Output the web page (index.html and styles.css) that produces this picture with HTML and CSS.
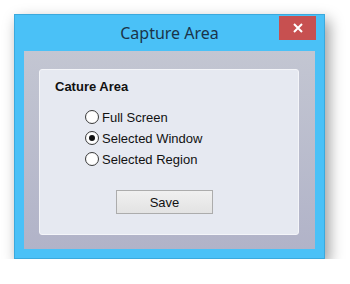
FILE: index.html
```html
<!DOCTYPE html>
<html lang="en">
<head>
    <meta charset="UTF-8">
    <title>Capture Area</title>
    <link rel="stylesheet" href="styles.css">
</head>
<body>
    <div class="window">
        <div class="titlebar">
            <span class="title">Capture Area</span>
            <div class="close-btn">
                <svg width="10" height="10" viewBox="0 0 10 10">
                    <path d="M1 1 L9 9 M9 1 L1 9" stroke="#fff" stroke-width="2"/>
                </svg>
            </div>
        </div>
        <div class="client">
            <div class="panel">
                <h3>Cature Area</h3>
                <div class="options">
                    <div class="option"><span class="radio"></span>Full Screen</div>
                    <div class="option"><span class="radio checked"></span>Selected Window</div>
                    <div class="option"><span class="radio"></span>Selected Region</div>
                </div>
                <button class="save-btn">Save</button>
            </div>
        </div>
    </div>
</body>
</html>
```

FILE: styles.css
```css
* {
    margin: 0;
    padding: 0;
    box-sizing: border-box;
}

body {
    background: #fff;
    font-family: 'Liberation Sans', Arial, sans-serif;
    font-size: 13px;
    color: #000;
}

.window {
    margin: 14px 0 0 14px;
    width: 311px;
    height: 245px;
    background: #4ac1f7;
    border: 1px solid #3ba9dd;
    padding: 0 9px 9px 9px;
    display: flex;
    flex-direction: column;
    box-shadow: 4px 6px 14px rgba(0, 0, 0, 0.4);
}

.titlebar {
    position: relative;
    height: 36px;
    display: flex;
    align-items: center;
    justify-content: center;
}

.title {
    font-family: 'Noto Sans', sans-serif;
    font-size: 16px;
    color: #1a3449;
}

.close-btn {
    position: absolute;
    top: 1px;
    right: -1px;
    width: 37px;
    height: 24px;
    background: #c75050;
    display: flex;
    align-items: center;
    justify-content: center;
}

.client {
    flex: 1;
    background: linear-gradient(#c3c6d2, #b1b3c8);
    padding: 18px 16px 14px 15px;
    display: flex;
}

.panel {
    flex: 1;
    background: #e6e9f1;
    border: 1px solid #f4f5f9;
    border-radius: 3px;
    padding: 9px 0 0 15px;
}

.panel h3 {
    font-size: 13px;
    font-weight: bold;
    color: #111;
    margin-bottom: 16px;
}

.options {
    padding-left: 30px;
    display: flex;
    flex-direction: column;
    gap: 7px;
}

.option {
    display: flex;
    align-items: center;
    gap: 3px;
    height: 14px;
    color: #111;
}

.radio {
    width: 14px;
    height: 14px;
    border-radius: 50%;
    border: 1px solid #3c3c3c;
    background: radial-gradient(#fff 55%, #e4e4e4);
    display: flex;
    align-items: center;
    justify-content: center;
}

.radio.checked::after {
    content: '';
    width: 6px;
    height: 6px;
    border-radius: 50%;
    background: #111;
}

.save-btn {
    margin: 24px 0 0 61px;
    width: 97px;
    height: 24px;
    border: 1px solid #acacac;
    background: linear-gradient(#f0f0f0, #e3e3e3);
    font-family: 'Liberation Sans', Arial, sans-serif;
    font-size: 13px;
    color: #111;
}
```
